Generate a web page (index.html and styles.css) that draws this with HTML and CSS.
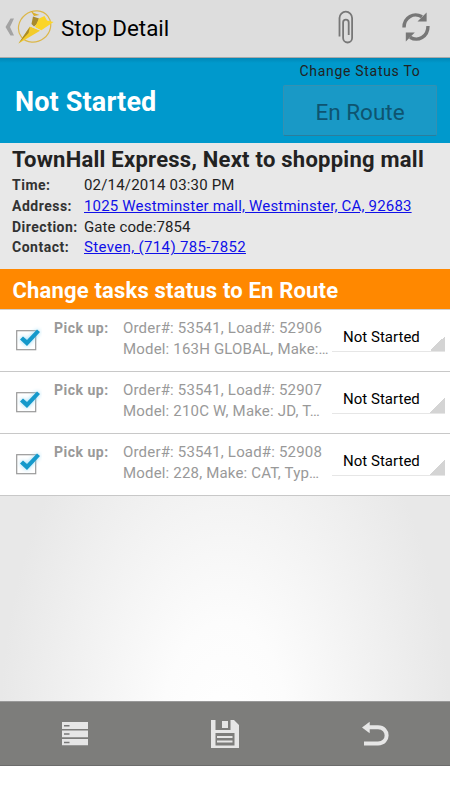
FILE: index.html
```html
<!DOCTYPE html>
<html lang="en">
<head>
    <meta charset="UTF-8">
    <meta name="viewport" content="width=device-width, initial-scale=1.0">
    <title>Stop Detail</title>
    <link rel="stylesheet" href="styles.css">
</head>
<body>
    <div class="screen">
        <header class="action-bar">
            <svg class="back" width="10" height="20" viewBox="0 0 10 20">
                <path d="M9 1.5 L5.5 1.5 L.5 10 L5.5 18.5 L9 18.5 L5 10 Z" fill="#a3a3a3"/>
            </svg>
            <svg class="logo" width="38" height="36" viewBox="0 0 38 36">
                <ellipse cx="17.6" cy="17.5" rx="16.8" ry="15" fill="none" stroke="#dcb74a" stroke-width="1.2" transform="rotate(-38 17.6 17.5)"/>
                <path d="M13.5 1.5 L17 4 L22.5 6 L17 7 Z" fill="#d9ae2a"/>
                <path d="M16 7.5 L22 9.5 L20 15 L17 17.5 L14.5 15 Z" fill="#a88a2c"/>
                <path d="M22 9.5 L27.5 7 L30 11.5 L36.5 13 L24 21.5 L18 18 Z" fill="#fbd527"/>
                <path d="M13 17.5 L23.5 21.5 L1.5 34.5 Z" fill="#f3cb2a"/>
                <path d="M13 17.5 L11.5 24 L1.5 34.5 Z" fill="#a88a2c"/>
                <path d="M12 16.5 L24.5 21.8" stroke="#ddd" stroke-width="1"/>
            </svg>
            <h1>Stop Detail</h1>
            <svg class="clip" width="16" height="34" viewBox="0 0 16 34">
                <path d="M1.5 26.5 V8 a6.3 6.3 0 0 1 12.6 0 V28 a4.5 4.5 0 0 1 -9 0 V12.5 a2.8 2.8 0 0 1 5.6 0 V25" fill="none" stroke="#777" stroke-width="1.8"/>
            </svg>
            <svg class="refresh" width="28" height="30" viewBox="0 0 28 30">
                <path d="M2 15.5 C2 5 12 0 20 4.8" fill="none" stroke="#777" stroke-width="3.4"/>
                <path d="M24.6 .5 V9.6 H15.5 Z" fill="#777"/>
                <path d="M26 14 C26 25 16 30 8 25.2" fill="none" stroke="#777" stroke-width="3.4"/>
                <path d="M3.8 29.5 V20.4 H12.8 Z" fill="#777"/>
            </svg>
        </header>

        <section class="status">
            <div class="current">Not Started</div>
            <div class="change">
                <span class="change-label">Change Status To</span>
                <button type="button">En Route</button>
            </div>
        </section>

        <section class="details">
            <h2>TownHall Express, Next to shopping mall</h2>
            <dl>
                <dt>Time:</dt>
                <dd class="time">02/14/2014 03:30 PM</dd>
                <dt>Address:</dt>
                <dd class="address"><a href="#">1025 Westminster mall, Westminster, CA, 92683</a></dd>
                <dt>Direction:</dt>
                <dd class="direction">Gate code:7854</dd>
                <dt>Contact:</dt>
                <dd class="contact"><a href="#">Steven, (714) 785-7852</a></dd>
            </dl>
        </section>

        <h3 class="banner">Change tasks status to En Route</h3>

        <ul class="tasks">
            <li>
                <svg class="check" width="28" height="26" viewBox="0 0 28 26">
                    <rect x="2.7" y="4.7" width="19" height="19" fill="#fff" stroke="#999" stroke-width="1.2"/>
                    <path d="M6 13.5 L9 10.5 L13 14 L23 3.5 L26 6 L13 20 Z" fill="#1499cb"/>
                </svg>
                <span class="kind">Pick up:</span>
                <div class="info">
                    <div class="order">Order#: 53541, Load#: 52906</div>
                    <div class="model">Model: 163H GLOBAL, Make:…</div>
                </div>
                <div class="spinner">Not Started</div>
            </li>
            <li>
                <svg class="check" width="28" height="26" viewBox="0 0 28 26">
                    <rect x="2.7" y="4.7" width="19" height="19" fill="#fff" stroke="#999" stroke-width="1.2"/>
                    <path d="M6 13.5 L9 10.5 L13 14 L23 3.5 L26 6 L13 20 Z" fill="#1499cb"/>
                </svg>
                <span class="kind">Pick up:</span>
                <div class="info">
                    <div class="order">Order#: 53541, Load#: 52907</div>
                    <div class="model">Model: 210C W, Make: JD, T…</div>
                </div>
                <div class="spinner">Not Started</div>
            </li>
            <li>
                <svg class="check" width="28" height="26" viewBox="0 0 28 26">
                    <rect x="2.7" y="4.7" width="19" height="19" fill="#fff" stroke="#999" stroke-width="1.2"/>
                    <path d="M6 13.5 L9 10.5 L13 14 L23 3.5 L26 6 L13 20 Z" fill="#1499cb"/>
                </svg>
                <span class="kind">Pick up:</span>
                <div class="info">
                    <div class="order">Order#: 53541, Load#: 52908</div>
                    <div class="model">Model: 228, Make: CAT, Typ…</div>
                </div>
                <div class="spinner">Not Started</div>
            </li>
        </ul>

        <footer class="toolbar">
            <svg width="30" height="30" viewBox="0 0 30 30">
                <path d="M2 3h26v7H2zM2 11.5h26v6.7H2zM2 20h26v6.3H2z" fill="#e6e6e6"/>
                <path d="M4 6.7h5.5M4 15h5.5M4 23.4h5.5" stroke="#777" stroke-width="1.5"/>
            </svg>
            <svg width="30" height="30" viewBox="0 0 30 30">
                <path d="M1 1 H5.5 V11 H20.5 V1 H24 L29 6 V29 H1 Z" fill="#e6e6e6"/>
                <path d="M12 2h6v7h-6z" fill="#e6e6e6"/>
                <path d="M5.5 14h19v12.5h-19z" fill="#7d7d7b"/>
                <path d="M7 18h15.5M7 22.5h15.5" stroke="#e6e6e6" stroke-width="1.8"/>
            </svg>
            <svg width="30" height="30" viewBox="0 0 30 30">
                <path d="M8 8.3 H18 C29.5 8.3 29.5 24.5 18 24.5 H4" fill="none" stroke="#e6e6e6" stroke-width="4"/>
                <path d="M2 8.5 L9.7 2.7 V14.3 Z" fill="#e6e6e6"/>
            </svg>
        </footer>
    </div>
</body>
</html>
```
FILE: styles.css
```css
* {
    box-sizing: border-box;
}

body {
    margin: 0;
    background-color: #fff;
    font-family: Roboto, sans-serif;
    color: #222;
}

h1, h2, h3, dl, dd, ul {
    margin: 0;
    padding: 0;
}

svg {
    display: block;
    flex: none;
}

.screen {
    display: flex;
    flex-direction: column;
    width: 450px;
    height: 766px;
    background: radial-gradient(ellipse 250px 430px at 225px 730px, #fff 0%, #fcfcfc 25%, #e8e8e8 90%);
}

.action-bar {
    display: flex;
    align-items: center;
    height: 58px;
    padding: 0 20px 3px 5px;
    background-color: #ddd;
    border-bottom: 1px solid #a9a9a9;
}

.logo {
    margin-left: 2px;
}

h1 {
    flex: 1;
    margin: 2px 0 0 6px;
    font-size: 22.4px;
    font-weight: 400;
    color: #000;
}

.clip {
    margin-right: 48px;
}

.status {
    display: flex;
    justify-content: space-between;
    height: 85px;
    padding: 0 13px 0 15px;
    background: linear-gradient(#0087b6 0, #0099cc 5px);
}

.current {
    font-size: 27px;
    font-weight: 700;
    line-height: 88px;
    letter-spacing: 0.15px;
    color: #fff;
}

.change {
    display: flex;
    flex-direction: column;
    align-items: center;
    width: 154px;
}

.change-label {
    height: 27px;
    font-size: 14px;
    line-height: 27px;
    letter-spacing: 0.7px;
}

button {
    width: 154px;
    height: 51px;
    padding: 2px 0 0;
    font-family: inherit;
    font-size: 22.5px;
    color: #0e5470;
    background-color: #1999c6;
    border: 1px solid #3590b1;
    border-bottom-color: #2b7d9c;
    border-radius: 2px;
}

.details {
    height: 126px;
    padding: 3px 12px 0;
}

h2 {
    height: 28px;
    font-size: 22px;
    font-weight: 700;
    line-height: 28px;
    letter-spacing: 0.25px;
    white-space: nowrap;
}

dl {
    display: grid;
    grid-template-columns: 72px 1fr;
    grid-auto-rows: 20.8px;
    font-size: 15px;
    line-height: 22px;
    white-space: nowrap;
}

dt {
    font-size: 14px;
    font-weight: 700;
    letter-spacing: 0.5px;
    color: #333;
}

dd {
    letter-spacing: 0.18px;
}

.direction {
    letter-spacing: 0.1px;
}

.contact {
    letter-spacing: 0.35px;
}

a {
    color: #1010e8;
}

.banner {
    height: 40px;
    padding-left: 12.5px;
    font-size: 22px;
    font-weight: 700;
    line-height: 43px;
    letter-spacing: 0.18px;
    color: #fff;
    background-color: #ff8800;
}

.tasks {
    list-style: none;
    border-top: 1px solid #d0d0d0;
}

.tasks li {
    display: flex;
    height: 62px;
    padding: 8px 5px 0 14px;
    font-size: 15px;
    line-height: 21px;
    color: #999;
    white-space: nowrap;
    background-color: #fff;
    border-bottom: 1px solid #c8c8c8;
}

.check {
    margin-top: 8px;
}

.check path {
    filter: drop-shadow(0 0 2px #8fd8f5);
}

.kind {
    width: 69px;
    margin-left: 12px;
    font-size: 14px;
    font-weight: 700;
    letter-spacing: 0.5px;
}

.info {
    width: 209px;
    letter-spacing: 0.18px;
}

/* underline with the small triangle in the right corner */
.spinner {
    width: 113px;
    height: 34px;
    padding: 9px 0 0 11px;
    letter-spacing: 0.02px;
    color: #000;
    background: linear-gradient(135deg, transparent 50%, #d4d4d4 50%) right bottom / 15px 15px no-repeat;
    border-bottom: 1px solid #e6e6e6;
}

.toolbar {
    display: flex;
    justify-content: space-around;
    height: 65px;
    margin-top: auto;
    padding-top: 17px;
    background-color: #7d7d7b;
    border-top: 1px solid #999;
    border-bottom: 1px solid #6c6c6c;
}
```
